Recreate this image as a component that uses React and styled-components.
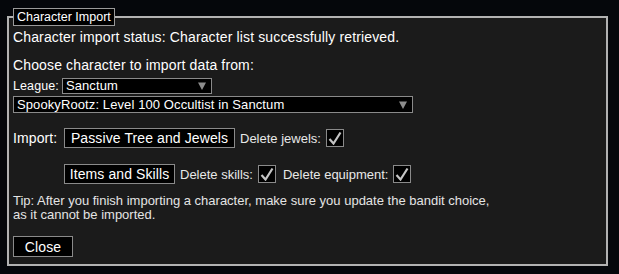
import React, { useState } from 'react';
import styled, { createGlobalStyle } from 'styled-components';

const GlobalStyle = createGlobalStyle`
  html, body {
    margin: 0;
    padding: 0;
    background: #05070b;
  }
  body {
    font-family: "Liberation Sans", Arial, sans-serif;
    font-size: 14px;
    color: #ffffff;
  }
`;

const Frame = styled.div`
  position: relative;
  box-sizing: border-box;
  margin: 16px 0 0 7px;
  width: 601px;
  height: 250px;
  border: 2px solid #b2b2b2;
  background: #1b1b1b;
  padding: 11px 0 0 4px;
`;

const Title = styled.div`
  position: absolute;
  left: 4px;
  top: -10px;
  box-sizing: border-box;
  height: 18px;
  padding: 0 3px;
  line-height: 16px;
  font-size: 12.5px;
  border: 1px solid #9a9a9a;
  background: #000;
`;

const Line = styled.div`
  font-size: ${(p) => p.$size || 14}px;
  line-height: ${(p) => p.$lh || 16}px;
  letter-spacing: ${(p) => (p.$size ? 0 : 0.14)}px;
  margin-top: ${(p) => p.$gap || 0}px;
  color: ${(p) => (p.$dim ? '#e4e4e4' : '#fff')};
`;

const Row = styled.div`
  display: flex;
  align-items: center;
  gap: ${(p) => p.$gap || 5}px;
  margin-top: ${(p) => p.$top || 0}px;
  padding-left: ${(p) => p.$indent || 0}px;
`;

const RowLabel = styled.span`
  width: ${(p) => p.$w || 'auto'};
  font-size: ${(p) => p.$size || 14}px;
  letter-spacing: 0.1px;
`;

const Select = styled.div`
  position: relative;
  box-sizing: border-box;
  width: ${(p) => p.$w}px;
  height: ${(p) => p.$h}px;
  border: 1px solid #8a8a8a;
  background: #000;
  padding-left: 3px;
  font-size: 13px;
  letter-spacing: 0.1px;
  line-height: ${(p) => p.$h - 2}px;
`;

const Arrow = styled.svg`
  position: absolute;
  right: 5px;
  top: 50%;
  margin-top: -4px;
`;

const Button = styled.button`
  box-sizing: border-box;
  height: ${(p) => p.$h || 20}px;
  width: ${(p) => p.$w}px;
  border: 1px solid #8a8a8a;
  background: #000;
  color: #fff;
  font-family: inherit;
  font-size: 14px;
  letter-spacing: 0.1px;
  padding: 0;
  cursor: pointer;
`;

const Label = styled.span`
  color: #e8e8e8;
  font-size: 13px;
  margin-left: ${(p) => p.$ml || 0}px;
`;

const Check = styled.button`
  box-sizing: border-box;
  width: 18px;
  height: 18px;
  border: 1px solid #8a8a8a;
  background: #000;
  padding: 0;
  display: flex;
  align-items: center;
  justify-content: center;
  cursor: pointer;
`;

const Dropdown = ({ w, h, children }) => (
  <Select $w={w} $h={h}>
    {children}
    <Arrow width="8" height="8" viewBox="0 0 8 8">
      <path d="M0 0.5 H8 L4 8 Z" fill="#8c8c8c" />
    </Arrow>
  </Select>
);

const CheckBox = () => {
  const [on, setOn] = useState(true);
  return (
    <Check onClick={() => setOn(!on)}>
      {on && (
        <svg width="14" height="14" viewBox="0 0 14 14">
          <path d="M1.5 8 L5.5 12.5 L12.5 1.5" stroke="#c4c4c4" strokeWidth="2.2" fill="none" />
        </svg>
      )}
    </Check>
  );
};

export default function App() {
  return (
    <>
      <GlobalStyle />
      <Frame>
        <Title>Character Import</Title>
        <Line>Character import status: Character list successfully retrieved.</Line>
        <Line $gap={12}>Choose character to import data from:</Line>
        <Row $top={5} $gap={3}>
          <RowLabel $size={12.5}>League:</RowLabel>
          <Dropdown w={150} h={16}>Sanctum</Dropdown>
        </Row>
        <Row $top={2}>
          <Dropdown w={400} h={17}>SpookyRootz: Level 100 Occultist in Sanctum</Dropdown>
        </Row>
        <Row $top={15} $gap={5}>
          <RowLabel $w="46px">Import:</RowLabel>
          <Button $w={171}>Passive Tree and Jewels</Button>
          <Label>Delete jewels:</Label>
          <CheckBox />
        </Row>
        <Row $top={16} $indent={51} $gap={5}>
          <Button $w={111}>Items and Skills</Button>
          <Label>Delete skills:</Label>
          <CheckBox />
          <Label $ml={2}>Delete equipment:</Label>
          <CheckBox />
        </Row>
        <Line $gap={10} $size={13} $lh={14} $dim>
          Tip: After you finish importing a character, make sure you update the bandit choice,
          <br />
          as it cannot be imported.
        </Line>
        <Row $top={14}>
          <Button $w={60} $h={21}>Close</Button>
        </Row>
      </Frame>
    </>
  );
}
